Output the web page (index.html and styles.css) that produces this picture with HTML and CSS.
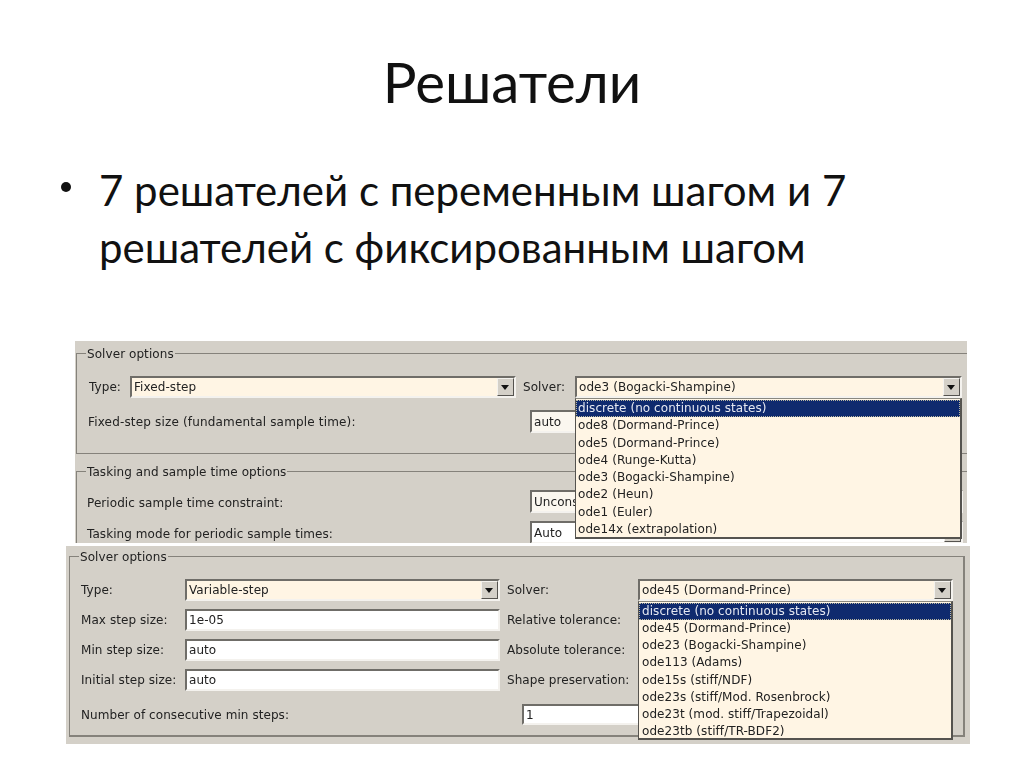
FILE: index.html
```html
<!DOCTYPE html>
<html lang="ru">
<head>
<meta charset="utf-8">
<title>Решатели</title>
<link rel="stylesheet" href="styles.css">
</head>
<body>
<main class="slide">
  <h1 class="title">Решатели</h1>
  <ul class="bullets">
    <li>7 решателей с переменным шагом и 7 решателей с фиксированным шагом</li>
  </ul>

  <section class="panel panel-fixed">
    <div class="group group-solver">
      <span class="legend">Solver options</span>
      <div class="row row-type">
        <span class="label label-type">Type:</span>
        <div class="field combo type-combo"><span>Fixed-step</span><i class="arrow"></i></div>
        <span class="label label-solver">Solver:</span>
        <div class="solver-wrap">
          <div class="field combo"><span>ode3 (Bogacki-Shampine)</span><i class="arrow"></i></div>
          <ul class="dropdown">
            <li class="selected">discrete (no continuous states)</li>
            <li>ode8 (Dormand-Prince)</li>
            <li>ode5 (Dormand-Prince)</li>
            <li>ode4 (Runge-Kutta)</li>
            <li>ode3 (Bogacki-Shampine)</li>
            <li>ode2 (Heun)</li>
            <li>ode1 (Euler)</li>
            <li>ode14x (extrapolation)</li>
          </ul>
        </div>
      </div>
      <div class="row row-size">
        <span class="label">Fixed-step size (fundamental sample time):</span>
        <div class="field input"><span>auto</span></div>
      </div>
    </div>
    <div class="group group-tasking">
      <span class="legend">Tasking and sample time options</span>
      <div class="row row-task">
        <span class="label">Periodic sample time constraint:</span>
        <div class="field input"><span>Uncons</span></div>
      </div>
      <div class="row row-task">
        <span class="label">Tasking mode for periodic sample times:</span>
        <div class="field input white"><span>Auto</span><i class="arrow"></i></div>
      </div>
    </div>
  </section>

  <section class="panel panel-variable">
    <div class="group group-variable">
      <span class="legend">Solver options</span>
      <div class="var-grid">
        <span class="label">Type:</span>
        <div class="field combo"><span>Variable-step</span><i class="arrow"></i></div>
        <span class="label">Solver:</span>
        <div class="solver-wrap">
          <div class="field combo"><span>ode45 (Dormand-Prince)</span><i class="arrow"></i></div>
          <ul class="dropdown dropdown-var">
            <li class="selected">discrete (no continuous states)</li>
            <li>ode45 (Dormand-Prince)</li>
            <li>ode23 (Bogacki-Shampine)</li>
            <li>ode113 (Adams)</li>
            <li>ode15s (stiff/NDF)</li>
            <li>ode23s (stiff/Mod. Rosenbrock)</li>
            <li>ode23t (mod. stiff/Trapezoidal)</li>
            <li>ode23tb (stiff/TR-BDF2)</li>
          </ul>
        </div>
        <span class="label">Max step size:</span>
        <div class="field input white"><span>1e-05</span></div>
        <span class="label">Relative tolerance:</span>
        <div class="field input white"></div>
        <span class="label">Min step size:</span>
        <div class="field input white"><span>auto</span></div>
        <span class="label">Absolute tolerance:</span>
        <div class="field input white"></div>
        <span class="label">Initial step size:</span>
        <div class="field input white"><span>auto</span></div>
        <span class="label">Shape preservation:</span>
        <div class="field input white"></div>
      </div>
      <div class="row row-consecutive">
        <span class="label">Number of consecutive min steps:</span>
        <div class="field input white"><span>1</span></div>
      </div>
    </div>
  </section>
</main>
</body>
</html>
```

FILE: styles.css
```css
* { box-sizing: border-box; }
html, body { margin: 0; padding: 0; background: #fff; }
.slide {
  width: 1024px;
  height: 767px;
  overflow: hidden;
  font-family: Lato, "Liberation Sans", sans-serif;
  color: #111;
}
.title {
  margin: 0;
  padding-top: 51px;
  height: 162px;
  text-align: center;
  font-weight: 400;
  font-size: 56.4px;
  line-height: 60px;
}
.bullets {
  margin: 0;
  padding: 0 120px 0 99px;
  height: 179px;
  list-style: none;
  font-size: 42px;
  line-height: 57px;
}
.bullets li { position: relative; width: 800px; }
.bullets li::before {
  content: "";
  position: absolute;
  left: -38px;
  top: 20px;
  width: 10px;
  height: 10px;
  border-radius: 50%;
  background: #111;
}

.panel {
  position: relative;
  background: #d4d0c8;
  font-family: "DejaVu Sans", sans-serif;
  font-size: 12px;
  letter-spacing: 0.07px;
  color: #222;
  filter: blur(0.35px);
}
.panel-fixed {
  width: 892px;
  height: 202px;
  margin-left: 75px;
  padding-top: 12px;
  overflow: hidden;
}
.panel-variable {
  width: 904px;
  height: 198px;
  margin: 3px 0 0 66px;
  padding: 10px 5px 0 3px;
}
.group {
  position: relative;
  border: 1px solid #85827b;
}
.legend {
  position: absolute;
  left: 9px;
  top: -7px;
  padding: 0 1px;
  background: #d4d0c8;
  line-height: 14px;
}
.group-solver { height: 101px; margin-left: 1px; padding-top: 22px; border-right: 0; }
.group-tasking { height: 90px; margin: 17px 0 0 1px; padding-top: 18px; border-right: 0; }
.group-variable { height: 181px; padding: 22px 10px 0 11px; border-width: 1px 2px 2px 1px; }

.row { display: flex; align-items: center; }
.label { white-space: nowrap; line-height: 14px; }

.field {
  position: relative;
  height: 22px;
  display: flex;
  align-items: center;
  border: 2px solid;
  border-color: #6f6d68 #f4f2ee #f4f2ee #6f6d68;
  padding-left: 2px;
  overflow: hidden;
  white-space: nowrap;
}
.combo, .dropdown { background: #fff5e4; }
.input { background: #fbf7ef; }
.white { background: #fff; }
.arrow {
  position: absolute;
  right: 0;
  top: 0;
  bottom: 0;
  width: 17px;
  background: #d4d0c8;
  border: 1px solid;
  border-color: #f4f2ee #55534f #55534f #f4f2ee;
}
.arrow::after {
  content: "";
  position: absolute;
  left: 3px;
  top: 6px;
  border: 4px solid transparent;
  border-top: 5px solid #111;
  border-bottom: 0;
}

.row-type { padding-left: 12px; }
.label-type { width: 41px; }
.type-combo { width: 386px; }
.label-solver { width: 52px; margin-left: 7px; }
.solver-wrap { position: relative; }
.row-type .solver-wrap { width: 387px; }
.row-size { margin-top: 12px; padding-left: 11px; height: 23px; }
.row-size .label { width: 442px; letter-spacing: 0.17px; }
.row-size .input { width: 300px; height: 23px; }
.row-task { padding-left: 10px; height: 23px; margin-bottom: 8px; }
.row-task .label { width: 443px; padding-top: 3px; }
.row-task .input { width: 433px; height: 23px; }

.dropdown {
  position: absolute;
  left: 0;
  top: 22px;
  width: 100%;
  margin: 0;
  padding: 1px 0 0;
  height: 141px;
  list-style: none;
  border: 1px solid #55534f;
  border-top-color: #8a887f;
  border-right-width: 2px;
  border-bottom-width: 2px;
  z-index: 2;
}
.dropdown li { height: 17.25px; line-height: 17.25px; padding-left: 2px; white-space: nowrap; }
.dropdown .selected { background: #0f2a6e; color: #e6e9f2; outline: 1px dotted #b9b7a0; outline-offset: -1px; }
.dropdown-var { height: 139px; top: 22px; }
.dropdown-var li { padding-left: 3px; }

.var-grid {
  display: grid;
  grid-template-columns: 104px 315px 138px 315px;
  grid-auto-rows: 21px;
  row-gap: 9px;
  align-items: center;
}
.var-grid > .label:nth-child(4n+3) { padding-left: 7px; }
.row-consecutive { margin-top: 14px; }
.row-consecutive .label { width: 441px; }
.row-consecutive .input { width: 300px; height: 21px; }
```
